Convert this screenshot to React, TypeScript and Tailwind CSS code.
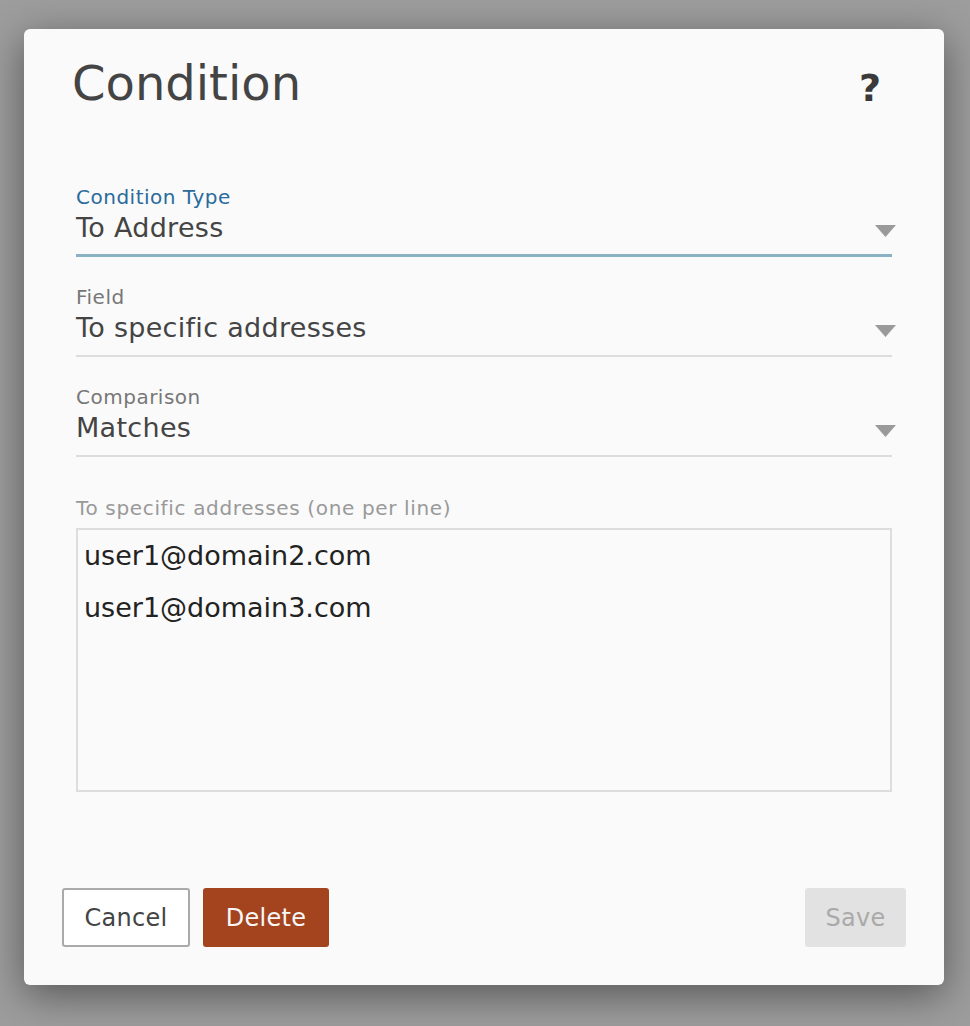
// Condition dialog (modal over gray backdrop)

const font = { fontFamily: '"DejaVu Sans", "Liberation Sans", sans-serif' };

const Caret = () => (
  <svg
    className="absolute right-[-4px] top-[40px]"
    width="21"
    height="12"
    viewBox="0 0 21 12"
  >
    <polygon points="0,0 21,0 10.5,12" fill="#9a9a9a" />
  </svg>
);

// select-style row: label, value, underline
const SelectRow = ({
  label,
  value,
  focused,
  className
}: {
  label: string;
  value: string;
  focused?: boolean;
  className?: string;
}) => (
  <div
    className={
      "relative h-[72px] " +
      (focused
        ? "border-b-[3px] border-[#89b3c3] "
        : "border-b-2 border-[#dddddd] ") +
      (className ?? "")
    }
  >
    <div
      className={
        "text-[20px] leading-[24px] tracking-[0.5px] " +
        (focused ? "text-[#2a6b9c]" : "text-[#777777]")
      }
    >
      {label}
    </div>
    <div className="mt-[3px] text-[27px] leading-[32px] tracking-[0.3px] text-[#444444]">
      {value}
    </div>
    <Caret />
  </div>
);

const App = () => {
  return (
    <div
      className="min-h-[1026px] w-full bg-[#9d9d9d] pl-[24px] pt-[29px]"
      style={font}
    >
      <div className="flex h-[956px] w-[920px] flex-col rounded-[6px] bg-[#fafafa] px-[38px] pt-[26px] pb-[38px] shadow-[0_10px_40px_rgba(0,0,0,0.45)]">
        {/* 제목 */}
        <div className="ml-[10px] mr-[25px] flex items-start justify-between">
          <h1 className="text-[48px] leading-[56px] text-[#444444]">
            Condition
          </h1>
          <span className="mt-[9px] text-[38px] font-bold leading-[48px] text-[#3a3a3a]">
            ?
          </span>
        </div>

        {/* 폼 */}
        <div className="mx-[14px] mt-[73px]">
          <SelectRow label="Condition Type" value="To Address" focused />
          <SelectRow
            label="Field"
            value="To specific addresses"
            className="mt-[28px]"
          />
          <SelectRow
            label="Comparison"
            value="Matches"
            className="mt-[28px]"
          />

          <div className="mt-[39px] text-[20px] leading-[24px] tracking-[0.65px] text-[#999999]">
            To specific addresses (one per line)
          </div>
          <div className="mt-[8px] h-[264px] border-2 border-[#dddddd] pl-[6px] text-[27px] leading-[52px] text-[#222222]">
            <div>user1@domain2.com</div>
            <div>user1@domain3.com</div>
          </div>
        </div>

        {/* 버튼 */}
        <div className="mt-auto flex items-center">
          <button className="h-[59px] w-[128px] rounded-[3px] border-2 border-[#aaaaaa] bg-white text-[24px] tracking-[0.3px] text-[#444444]">
            Cancel
          </button>
          <button className="ml-[13px] h-[59px] w-[126px] rounded-[3px] bg-[#a3441f] text-[24px] tracking-[0.3px] text-[#f7f7f7]">
            Delete
          </button>
          <button className="ml-auto h-[59px] w-[101px] rounded-[3px] bg-[#e2e2e2] text-[24px] tracking-[0.3px] text-[#aaaaaa]">
            Save
          </button>
        </div>
      </div>
    </div>
  );
};

export default App;
